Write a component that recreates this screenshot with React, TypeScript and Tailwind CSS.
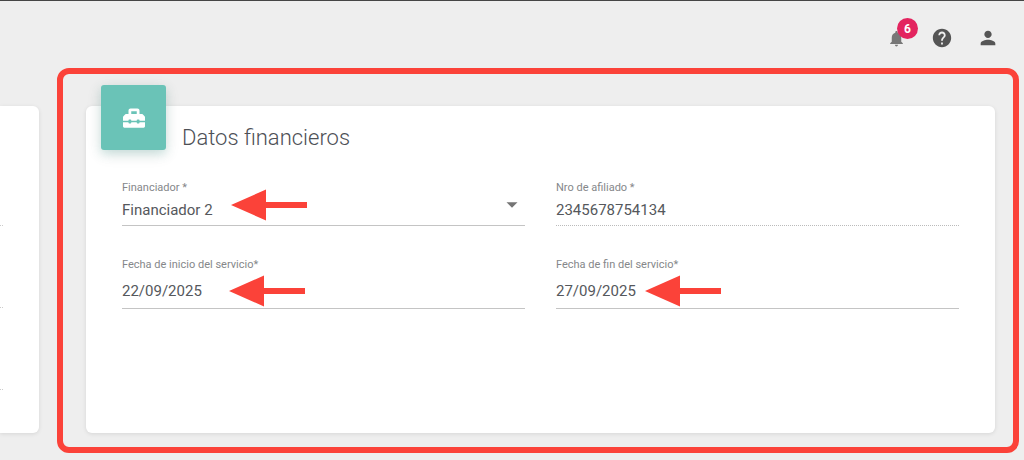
import { useState } from 'react';
import type { ReactNode } from 'react';
import { MdHelp, MdNotifications, MdPerson } from 'react-icons/md';
import { FaToolbox } from 'react-icons/fa';

interface FieldProps {
  id: string;
  label: string;
  children: ReactNode;
}

const financiadores = ['Financiador 1', 'Financiador 2', 'Financiador 3'];

const controlClass =
  'block w-full appearance-none bg-transparent p-0 text-[15px] leading-5 text-[#55585c] outline-none';

function Arrow({ className }: { className: string }) {
  return (
    <svg className={`pointer-events-none absolute ${className}`} width="76" height="32" viewBox="0 0 76 32" aria-hidden="true">
      <path d="M0 16L35 0.5V13H76V19H35V31.5Z" fill="#fb4239" />
    </svg>
  );
}

function Field({ id, label, children }: FieldProps) {
  return (
    <div className="relative">
      <label htmlFor={id} className="block text-[11px] leading-4 text-[#85878a]">
        {label}
      </label>
      {children}
    </div>
  );
}

function Header() {
  return (
    <header className="flex items-center justify-end gap-6 border-t border-[#454545] pt-[26px] pr-[25px] text-[#555555]">
      <button type="button" aria-label="Notificaciones" className="relative flex h-[22px] w-[22px] items-center justify-center">
        <MdNotifications size={19} className="text-[#777777]" />
        <span className="absolute -top-[9px] left-3 flex h-[21px] w-[21px] items-center justify-center rounded-full bg-[#e3245f] text-xs font-bold text-white">
          6
        </span>
      </button>
      <button type="button" aria-label="Ayuda" className="flex h-[22px] w-[22px] items-center justify-center">
        <MdHelp size={22} />
      </button>
      <button type="button" aria-label="Perfil" className="flex h-[22px] w-[22px] items-center justify-center">
        <MdPerson size={22} />
      </button>
    </header>
  );
}

export default function App() {
  const [financiador, setFinanciador] = useState('Financiador 2');
  const [inicio, setInicio] = useState('22/09/2025');
  const [fin, setFin] = useState('27/09/2025');

  return (
    <div className="min-h-screen overflow-hidden bg-[#eeeeee] font-['Roboto',sans-serif]">
      <Header />

      <main className="mt-[57px] flex gap-[47px] pr-[29px]">
        {/* Borde derecho de la tarjeta anterior */}
        <section className="w-[39px] shrink-0 rounded-r-md bg-white pt-[38px] shadow-[0_1px_4px_rgba(0,0,0,0.1)]">
          <div className="h-[82px] w-[3px] border-b border-dotted border-[#cccccc]" />
          <div className="h-[82px] w-[3px] border-b border-dotted border-[#cccccc]" />
          <div className="h-[82px] w-[3px] border-b border-dotted border-[#cccccc]" />
        </section>

        <section className="relative min-h-[327px] min-w-0 flex-1 rounded-md bg-white shadow-[0_1px_4px_rgba(0,0,0,0.1)]">
          {/* Marco que resalta la sección */}
          <div className="pointer-events-none absolute -top-[38px] -right-[24px] -bottom-[20px] -left-[29px] rounded-xl border-6 border-[#fb4239]" />

          <div className="flex items-start gap-4 px-[15px]">
            <div className="relative -mt-[21px] flex h-[65px] w-[65px] items-center justify-center rounded-[3px] bg-[#6ac3b7] text-white shadow-[0_4px_16px_rgba(0,0,0,0.1),0_4px_10px_rgba(106,195,183,0.25)]">
              <FaToolbox size={22} />
            </div>
            <h2 className="mt-[18px] text-[22px] leading-7 font-light text-[#4d5056]">Datos financieros</h2>
          </div>

          <form className="mt-7 grid grid-cols-2 gap-x-[31px] gap-y-[31px] px-9">
            <Field id="financiador" label="Financiador *">
              <div className="relative border-b border-[#c4c4c4] pt-1 pb-[5px]">
                <select
                  id="financiador"
                  value={financiador}
                  onChange={(e) => setFinanciador(e.target.value)}
                  className={controlClass}
                >
                  {financiadores.map((f) => (
                    <option key={f} value={f}>{f}</option>
                  ))}
                </select>
                <svg className="pointer-events-none absolute top-[6px] right-[7px]" width="12" height="6" viewBox="0 0 12 6" aria-hidden="true">
                  <path d="M0.5 0.3H11.5L6 5.7Z" fill="#757575" />
                </svg>
              </div>
              <Arrow className="top-[9px] left-[109px]" />
            </Field>

            <Field id="afiliado" label="Nro de afiliado *">
              <div className="border-b border-dotted border-[#bbbbbb] pt-1 pb-[5px]">
                <input id="afiliado" type="text" value="2345678754134" disabled className={controlClass} />
              </div>
            </Field>

            <Field id="inicio" label="Fecha de inicio del servicio*">
              <div className="border-b border-[#c4c4c4] pt-2 pb-[7px]">
                <input id="inicio" type="text" value={inicio} onChange={(e) => setInicio(e.target.value)} className={controlClass} />
              </div>
              <Arrow className="top-[18px] left-[107px]" />
            </Field>

            <Field id="fin" label="Fecha de fin del servicio*">
              <div className="border-b border-[#c4c4c4] pt-2 pb-[7px]">
                <input id="fin" type="text" value={fin} onChange={(e) => setFin(e.target.value)} className={controlClass} />
              </div>
              <Arrow className="top-[18px] left-[89px]" />
            </Field>
          </form>
        </section>
      </main>
    </div>
  );
}
